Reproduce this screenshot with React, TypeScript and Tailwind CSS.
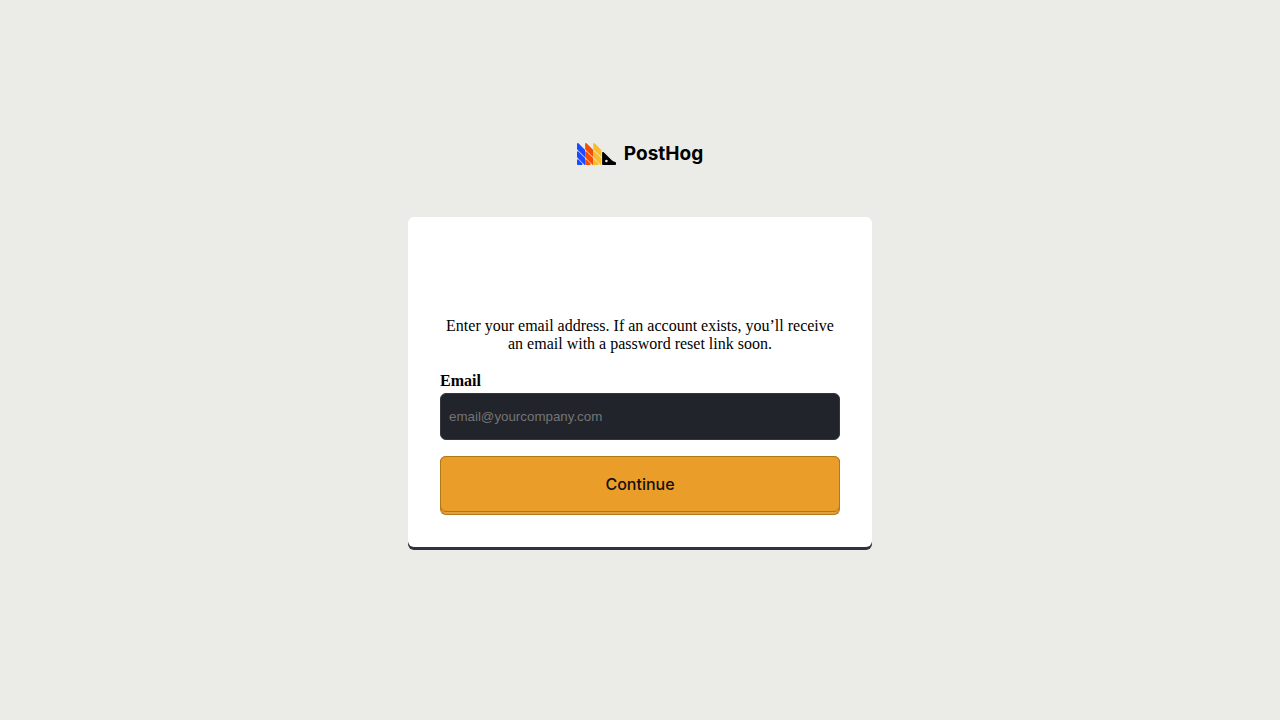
import React from "react";

function Stripes({ x, fill }: { x: number; fill: string }) {
  return (
    <g transform={`translate(${x} 0)`} fill={fill}>
      <path d="M0 3.2C0 2.2 1.08 1.78 1.7 2.4L10 10.6v9L.3 9.9A1 1 0 0 1 0 9.2Z" />
      <path d="M0 13C0 12.1 1.08 11.7 1.7 12.3L10 20.6v8.4H9.4L.3 19.9A1 1 0 0 1 0 19.2Z" />
      <path d="M0 23C0 22.1 1.08 21.7 1.7 22.3L6.6 27.3C7.2 27.9 6.8 29 5.9 29H1A1 1 0 0 1 0 28Z" />
    </g>
  );
}

function Logo() {
  return (
    <div className="flex items-center gap-2" aria-label="PostHog">
      <svg viewBox="0 2 48 27" className="h-[22px] w-[39px]" aria-hidden="true">
        <Stripes x={0} fill="#1d4aff" />
        <Stripes x={10} fill="#f54e00" />
        <Stripes x={20} fill="#f9bd2b" />
        <path
          fill="#000"
          fillRule="evenodd"
          d="M42.525 23.031l-9.713-9.713c-.63-.63-1.907-.184-1.907.707v13.967a1 1 0 0 0 1 1h15.08a1 1 0 0 0 1-1v-1.7c0-.552-.449-.992-.997-1.064a7.7 7.7 0 0 1-4.463-2.197zm-6.321 2.762a1.6 1.6 0 1 1 0-3.2 1.6 1.6 0 0 1 0 3.2z"
        />
      </svg>
      <span className="font-['Inter',sans-serif] text-[19px] leading-6 font-bold text-black">PostHog</span>
    </div>
  );
}

export default function App() {
  return (
    <main className="flex min-h-screen flex-col items-center bg-[#ebece7] px-4 pt-[142px] pb-10 font-['Liberation_Serif',serif] text-base leading-[18px] text-black">
      <Logo />
      <section className="mt-[51px] w-full max-w-[464px] rounded-md bg-white px-8 pt-[100px] pb-8 shadow-[0_3px_0_#35303d]">
        <p className="text-center">
          Enter your email address. If an account exists, you’ll receive an email with a password reset link soon.
        </p>
        <form className="mt-[19px] flex flex-col" onSubmit={(e) => e.preventDefault()}>
          <label htmlFor="email" className="font-bold">
            Email
          </label>
          <input
            id="email"
            type="email"
            placeholder="email@yourcompany.com"
            className="mt-[3px] h-[47px] w-full rounded-md border border-[#35373e] bg-[#21242b] px-2 font-['Liberation_Sans',sans-serif] [font-size:smaller] text-white placeholder:text-[#757575]"
          />
          <button
            type="submit"
            className="mt-4 rounded-md border border-t-0 border-[#b17816] bg-[#e0a045] pb-0.5"
          >
            <span className="-mx-px flex h-14 items-center justify-center rounded-md border border-[#b17816] bg-[#eb9d2a] font-['Inter',sans-serif] text-base font-medium text-[#111]">
              Continue
            </span>
          </button>
        </form>
      </section>
    </main>
  );
}
